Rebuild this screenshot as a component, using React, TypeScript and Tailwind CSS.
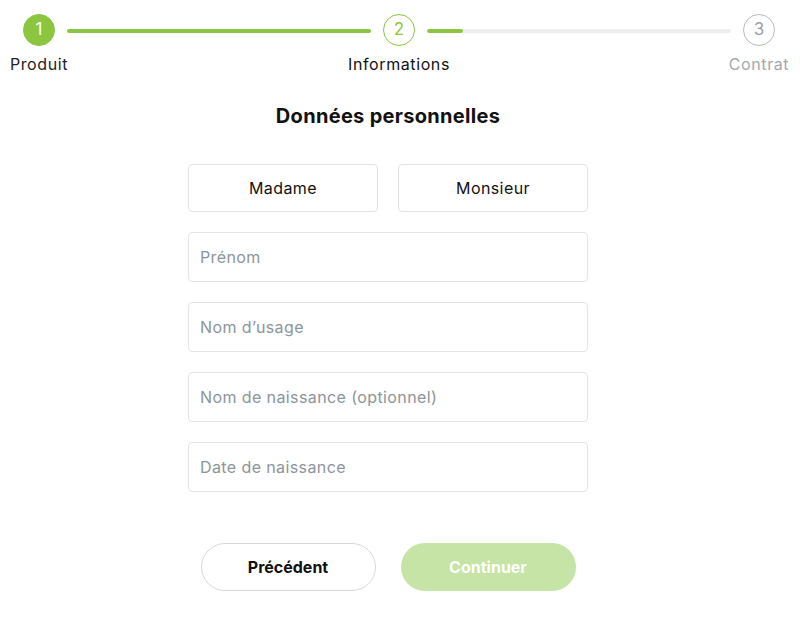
import React from "react";

const steps = [
  { n: 1, label: "Produit", state: "done" },
  { n: 2, label: "Informations", state: "current" },
  { n: 3, label: "Contrat", state: "todo" },
];

const Step = ({ n, label, state }: { n: number; label: string; state: string }) => {
  const circle =
    state === "done"
      ? "bg-[#8cc63f] border-[#8cc63f] text-white"
      : state === "current"
        ? "bg-white border-[#8cc63f] text-[#8cc63f]"
        : "bg-white border-[#b4babe] text-[#9aa1a6]";
  const text =
    state === "current" ? "text-[#111]" : state === "done" ? "text-[#222]" : "text-[#a2a9ad]";
  return (
    <div className="flex flex-col items-center w-[32px] shrink-0">
      <div
        className={`w-[32px] h-[32px] rounded-full border flex items-center justify-center text-[17px] ${circle}`}
      >
        {n}
      </div>
      <div
        className={`mt-[6px] text-[16px] leading-[24px] tracking-[0.6px] whitespace-nowrap ${text}`}
      >
        {label}
      </div>
    </div>
  );
};

const Field = ({ placeholder }: { placeholder: string }) => (
  <input
    placeholder={placeholder}
    className="w-full h-[50px] rounded-[4px] border border-[#e1e4e6] px-[11px] text-[16px] tracking-[0.4px] text-[#222] placeholder:text-[#8b959a] outline-none"
  />
);

export default function App() {
  return (
    <div
      className="w-[800px] h-[628px] bg-white overflow-hidden"
      style={{ fontFamily: "Inter, 'Noto Sans', sans-serif" }}
    >
      <div className="flex items-start pl-[23px] pr-[25px] pt-[14px]">
        <Step {...steps[0]} />
        <div className="flex-1 mx-[12px] mt-[15px] h-[4px] rounded-full bg-[#8cc63f]" />
        <Step {...steps[1]} />
        <div className="flex-1 mx-[12px] mt-[15px] h-[4px] rounded-full bg-[#eeeeee] overflow-hidden">
          <div className="w-[36px] h-full rounded-full bg-[#8cc63f]" />
        </div>
        <Step {...steps[2]} />
      </div>

      <div className="w-[400px] ml-[188px] flex flex-col">
        <h1 className="mt-[26px] text-center text-[20px] leading-[28px] tracking-[0.3px] font-bold text-[#111]">
          Données personnelles
        </h1>

        <div className="mt-[34px] grid grid-cols-2 gap-[20px]">
          <button className="h-[48px] rounded-[4px] border border-[#e1e4e6] text-[16px] tracking-[0.4px] text-[#111]">
            Madame
          </button>
          <button className="h-[48px] rounded-[4px] border border-[#e1e4e6] text-[16px] tracking-[0.4px] text-[#111]">
            Monsieur
          </button>
        </div>

        <div className="mt-[20px] flex flex-col gap-[20px]">
          <Field placeholder="Prénom" />
          <Field placeholder="Nom d’usage" />
          <Field placeholder="Nom de naissance (optionnel)" />
          <Field placeholder="Date de naissance" />
        </div>

        <div className="mt-[51px] flex justify-center gap-[25px]">
          <button className="w-[175px] h-[48px] rounded-full border border-[#d6d9db] bg-white text-[16px] font-bold text-[#111]">
            Précédent
          </button>
          <button className="w-[175px] h-[48px] rounded-full bg-[#c5e4a5] text-[16px] font-bold text-white">
            Continuer
          </button>
        </div>
      </div>
    </div>
  );
}
